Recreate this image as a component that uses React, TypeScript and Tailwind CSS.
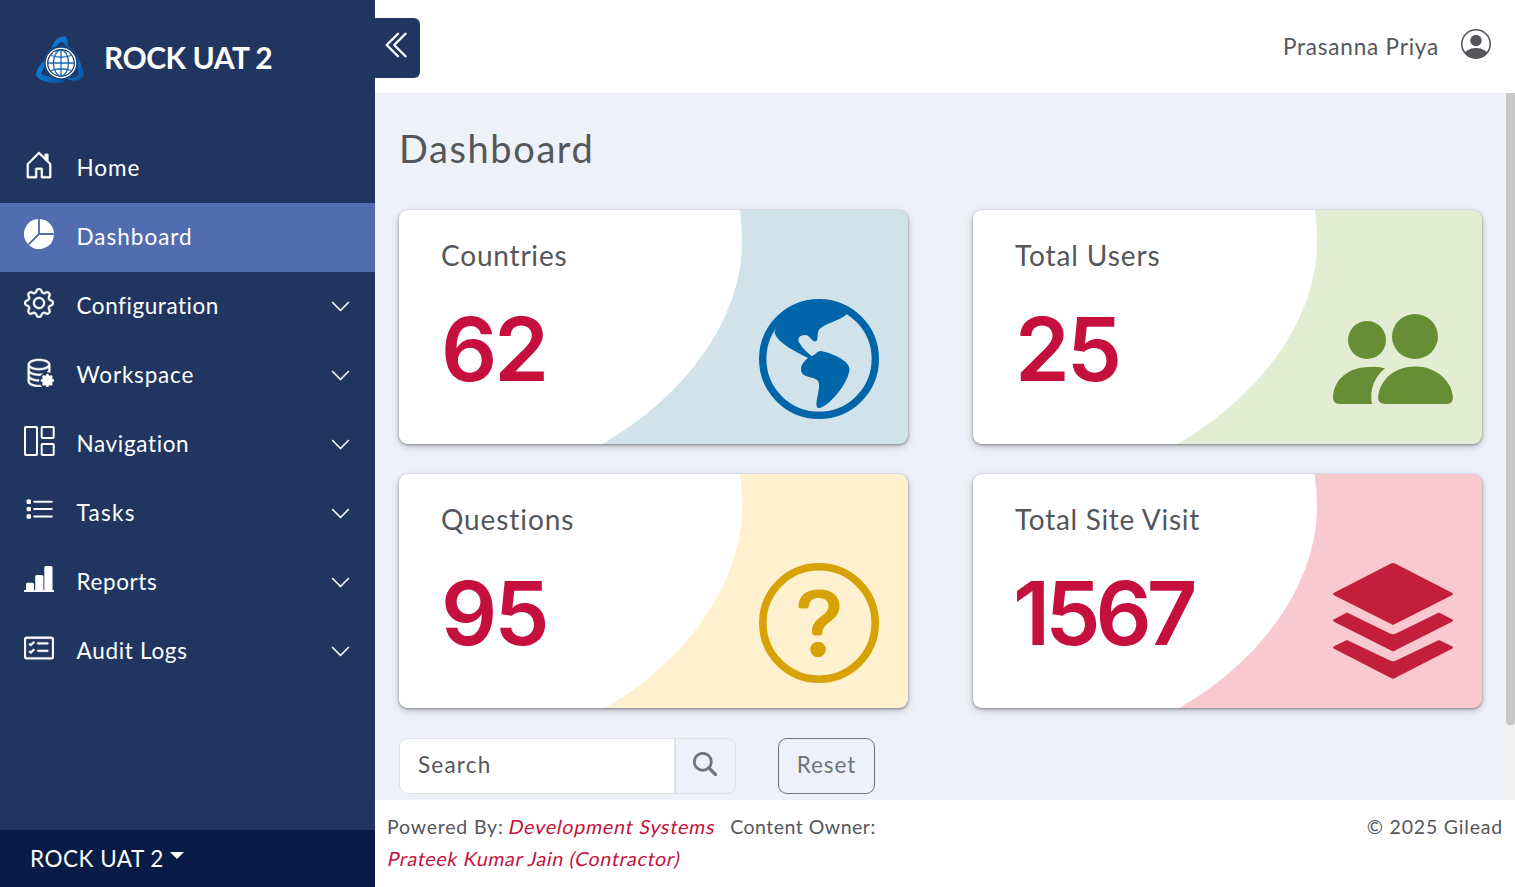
import { BsHouseDoor, BsPieChartFill, BsGear, BsDatabaseGear, BsCardChecklist, BsChevronDown, BsChevronDoubleLeft } from "react-icons/bs";
import type { ReactNode } from "react";

function Logo() {
  return (
    <svg viewBox="0 0 48 48" className="h-12 w-12 shrink-0">
      <defs>
        <linearGradient id="ribbon" x1="0" y1="0" x2="1" y2="1">
          <stop offset="0" stopColor="#0f8be0" />
          <stop offset="0.55" stopColor="#0b70c4" />
          <stop offset="1" stopColor="#0c4a94" />
        </linearGradient>
      </defs>
      <path d="M13.500 17.500C16 8 21 .5 27.500 .3C31 .3 32.500 5 32 10L28.500 9C28 5.500 25 5 22.500 8C19 12 17 17 13.500 17.500Z" fill="url(#ribbon)" />
      <path d="M0 39C1 32 6 26 13 20C9.500 27 8 32 5 37.500C10 41 18 42 25 42L29 46C18 48.500 3 46 0 39Z" fill="url(#ribbon)" />
      <path d="M29 8C38 13 45 24 48 38C48 44 41 46 33 44L30 42C38 42 41.500 40.500 42.500 38C42 28 37 17 29 8Z" fill="url(#ribbon)" />
      <circle cx="25" cy="26.500" r="17.300" fill="#114b8d" />
      <circle cx="25" cy="27" r="15.800" fill="#1b2f5c" />
      <circle cx="25" cy="27" r="14.600" fill="none" stroke="#fff" strokeWidth="1.400" />
      <circle cx="25" cy="27" r="12.700" fill="#fff" />
      <g fill="none" stroke="#1768b0" strokeWidth="1.300">
        <path d="M25 14V40.500M12 27H38M15 19.500Q25 23 35 19.500M15 34.500Q25 31 35 34.500" />
        <ellipse cx="25" cy="27" rx="7.500" ry="13" />
      </g>
    </svg>
  );
}

function PanelsIcon() {
  return (
    <svg viewBox="0 0 31 30" className="h-[30px] w-[31px]" fill="none" stroke="currentColor" strokeWidth="2">
      <rect x="1" y="1" width="12" height="28" rx=".8" />
      <rect x="17.700" y="1" width="12" height="11" rx=".8" />
      <rect x="17.700" y="18" width="12" height="11" rx=".8" />
    </svg>
  );
}

function ListIcon() {
  return (
    <svg viewBox="0 0 30 30" className="h-[30px] w-[30px]" fill="currentColor">
      <rect x="2.600" y="4.500" width="4.400" height="4.400" rx="1" />
      <rect x="2.600" y="11.900" width="4.400" height="4.400" rx="1" />
      <rect x="2.600" y="19.300" width="4.400" height="4.400" rx="1" />
      <rect x="9.200" y="5.700" width="19.500" height="2" rx="1" />
      <rect x="9.200" y="13.100" width="19.500" height="2" rx="1" />
      <rect x="9.200" y="20.500" width="19.500" height="2" rx="1" />
    </svg>
  );
}

function BarsIcon() {
  return (
    <svg viewBox="0 0 30 30" className="h-[30px] w-[30px]" fill="currentColor">
      <path d="M2 27V20.200a1.500 1.500 0 0 1 1.500-1.500h5a1.500 1.500 0 0 1 1.500 1.500V27zM11.200 27V12.500a1.500 1.500 0 0 1 1.500-1.500h5.200a1.500 1.500 0 0 1 1.500 1.500V27zM20.300 27V3.500a1.500 1.500 0 0 1 1.500-1.500h5.200a1.500 1.500 0 0 1 1.500 1.500V27z" />
      <rect x="0" y="26" width="30" height="2" />
    </svg>
  );
}

const nav: { label: string; icon: ReactNode; spacing: string; active?: boolean; open?: boolean }[] = [
  { label: "Home", icon: <BsHouseDoor size={30} strokeWidth={0.2} />, spacing: "tracking-[1px]" },
  { label: "Dashboard", icon: <BsPieChartFill size={30} />, spacing: "tracking-[1px]", active: true },
  { label: "Configuration", icon: <BsGear size={30} strokeWidth={0.25} />, spacing: "tracking-[0.55px]", open: true },
  { label: "Workspace", icon: <BsDatabaseGear size={30} strokeWidth={0.25} />, spacing: "tracking-[0.8px]", open: true },
  { label: "Navigation", icon: <PanelsIcon />, spacing: "tracking-[0.65px]", open: true },
  { label: "Tasks", icon: <ListIcon />, spacing: "tracking-[1.3px]", open: true },
  { label: "Reports", icon: <BarsIcon />, spacing: "tracking-[0.6px]", open: true },
  { label: "Audit Logs", icon: <BsCardChecklist size={30} strokeWidth={0.25} />, spacing: "tracking-[0.7px]", open: true },
];

function GlobeArt() {
  return (
    <svg viewBox="0 0 120 120" className="h-[120px] w-[120px]" fill="#0065a9">
      <circle cx="60" cy="60" r="56.300" fill="none" stroke="#0065a9" strokeWidth="7.400" />
      <path d="M15.500 33C24 13 42 3 60 3C72 3 82 8 87.500 15.500C80 22 67 24 60.500 30C57 34 60.500 42 56 42.500C52 42 51 36 46 36C40 36 38 40 40.500 44C44 50 49 54 52.500 57C57 56 57 52 62 52C73 54 91 62 90.500 70.500C90 82 73 105 61 109C57 110 57 105 58 100C59.500 93 61.500 84 58.500 81.500C54 77 42 79 42 70.500C42 66 45 62 49 59C37 53 17 43 15.500 33Z" />
    </svg>
  );
}

function UsersArt() {
  return (
    <svg viewBox="0 0 120 90" className="h-[90px] w-[120px]" fill="#688e35">
      <ellipse cx="34" cy="26" rx="19" ry="19" />
      <ellipse cx="82" cy="22.500" rx="23" ry="22.500" />
      <path d="M6 90Q0 90 0 83C1 65 16 53 36 53Q46 52 52 54.500C42 62 36 76 39 90Z" />
      <path d="M52 90Q45 90 45 83C47 65 62 52.500 82 52.500C103 52.500 118 66 120 83Q120 90 114 90Z" />
    </svg>
  );
}

function QuestionArt() {
  return (
    <svg viewBox="0 0 120 120" className="h-[120px] w-[120px]" fill="none" stroke="#d6a206">
      <circle cx="60" cy="60" r="56.200" strokeWidth="7.600" />
      <path d="M39.500 43.500Q39.500 45.500 41.500 45.500H47.500Q49.500 45.500 50 43C50.500 37.500 54 35 60 35C66 35 69.500 38 69.500 43C69.500 54 53 53 53 69Q53 72.500 56 72.500H60.500Q63.500 72.500 63.500 69.500C63.500 59 80.500 58 80.500 43C80.500 32 72 26.500 60 26.500C47 26.500 39.500 33 39.500 43.500Z" fill="#d6a206" stroke="none" />
      <circle cx="59" cy="86.500" r="7.800" fill="#d6a206" stroke="none" />
    </svg>
  );
}

function LayersArt() {
  return (
    <svg viewBox="0 0 120 116" className="mb-1 h-[116px] w-[120px]" fill="#c41e3d">
      <path d="M58 .5Q60-.4 62 .5L118.500 29.500Q121.500 31 118.500 32.500L60 62L1.500 32.500Q-1.500 31 1.500 29.500Z" />
      <path d="M14 49.500L57 70.500Q60 72 63 70.500L106 49.500L118.500 56Q121.500 57.500 118.500 59L60 88.500L1.500 59Q-1.500 57.500 1.500 56Z" />
      <path d="M14 77L57 97.500Q60 99 63 97.500L106 77L118.500 83Q121.500 84.500 118.500 86L62 115Q60 116.500 58 115L1.500 86Q-1.500 84.500 1.500 83Z" />
    </svg>
  );
}

function StatCard({ title, value, tint, art, curve, titleSpacing, valueSpacing }: { title: string; value: string; tint: string; art: ReactNode; curve: string; titleSpacing: string; valueSpacing: string }) {
  return (
    <div className={`relative h-[234px] w-[509px] overflow-hidden rounded-[9px] shadow-[0_1px_3px_rgba(0,0,0,0.4),0_3px_8px_rgba(0,0,0,0.18)] ${tint}`}>
      <svg className="absolute inset-0" width="509" height="234" viewBox="0 0 509 234">
        <path d={curve} fill="#fff" />
      </svg>
      <div className="relative flex h-full justify-between">
        <div className="pl-[42px] pt-[27px]">
          <h2 className={`whitespace-nowrap text-[28px] leading-9 text-[#54565b] ${titleSpacing}`}>{title}</h2>
          <p className={`mt-[21px] whitespace-nowrap font-['Inter',sans-serif] text-[88px] font-semibold leading-[110px] text-[#c50f3c] ${valueSpacing}`}>{value}</p>
        </div>
        <div className="mb-[25px] mr-[29px] flex h-[120px] w-[120px] items-center justify-center self-end">{art}</div>
      </div>
    </div>
  );
}

const leftCurve = "M0 0H341Q343 16 343 32C343 110 285 187 203 234H0Z";
const leftLowCurve = "M0 0H341Q343 16 343 32C343 110 287 187 206 234H0Z";
const rightCurve = "M0 0H342Q344 16 344 32C344 110 286 187 204 234H0Z";
const rightLowCurve = "M0 0H341.500Q344 16 344 32C344 110 288 187 206 234H0Z";

export default function App() {
  return (
    <div className="flex h-[887px] w-[1515px] overflow-hidden bg-white font-['Lato',sans-serif] text-[#54565b]">
      <aside className="flex w-[375px] shrink-0 flex-col bg-[#203660] text-white">
        <div className="flex h-[134px] items-start gap-5 pl-9 pt-9">
          <Logo />
          <span className="mt-[3px] whitespace-nowrap text-[30px] font-bold leading-9 tracking-[-0.5px]">ROCK UAT 2</span>
        </div>
        <nav>
          {nav.map((n) => (
            <div key={n.label} className={`flex h-[69px] items-center pl-6 pr-6 ${n.active ? "bg-[#526cb0]" : ""}`}>
              <span className="mb-[7px] flex w-[52.500px]">{n.icon}</span>
              <span className={`mb-[2px] flex-1 whitespace-nowrap text-[22.500px] leading-8 ${n.spacing}`}>{n.label}</span>
              {n.open && <BsChevronDown size={21} strokeWidth={0.2} />}
            </div>
          ))}
        </nav>
        <div className="mt-auto flex h-[57px] items-center gap-1.5 bg-[#081c47] pl-[30px]">
          <span className="whitespace-nowrap text-[22.500px] tracking-[0.5px]">ROCK UAT 2</span>
          <svg viewBox="0 0 14 7" className="mb-1.5 h-[7px] w-3.5"><path d="M0 0H14L7 7Z" fill="#fff" /></svg>
        </div>
      </aside>
      <div className="flex flex-1 flex-col">
        <header className="flex h-[93px] items-start justify-between pr-6">
          <button className="mt-[18px] flex h-[60px] w-[45px] items-center rounded-r-md bg-[#203660] pb-1.5 pl-2 text-white">
            <BsChevronDoubleLeft size={30} strokeWidth={0.25} />
          </button>
          <div className="flex items-start gap-[22px]">
            <span className="mt-[31px] whitespace-nowrap text-[22.500px] leading-8 tracking-[0.8px]">Prasanna Priya</span>
            <svg viewBox="0 0 30 30" className="mt-[29px] h-[30px] w-[30px]">
              <defs><clipPath id="face"><circle cx="15" cy="15" r="14.500" /></clipPath></defs>
              <circle cx="15" cy="15" r="14.200" fill="none" stroke="#54565b" strokeWidth="1.600" />
              <circle cx="15" cy="11.500" r="5.700" fill="#54565b" />
              <ellipse cx="15" cy="27.500" rx="12.500" ry="8.500" fill="#54565b" clipPath="url(#face)" />
            </svg>
          </div>
        </header>
        <main className="flex h-[707px] bg-[#eef1fa]">
          <div className="flex-1 pl-6">
            <h1 className="pt-[31px] text-[38px] leading-[48px] tracking-[1.6px]">Dashboard</h1>
            <div className="mt-[38px] grid grid-cols-[509px_509px] gap-x-[65px] gap-y-[30px]">
              <StatCard title="Countries" value="62" tint="bg-[#d2e2ea]" art={<GlobeArt />} curve={leftCurve} titleSpacing="tracking-[0.8px]" valueSpacing="tracking-[-3px]" />
              <StatCard title="Total Users" value="25" tint="bg-[#e2edd3]" art={<UsersArt />} curve={rightCurve} titleSpacing="tracking-[0.9px]" valueSpacing="tracking-[-3px]" />
              <StatCard title="Questions" value="95" tint="bg-[#fff1cf]" art={<QuestionArt />} curve={leftLowCurve} titleSpacing="tracking-[0.9px]" valueSpacing="tracking-[-3px]" />
              <StatCard title="Total Site Visit" value="1567" tint="bg-[#f8cacf]" art={<LayersArt />} curve={rightLowCurve} titleSpacing="tracking-[0.7px]" valueSpacing="-ml-0.5 tracking-[-5px]" />
            </div>
            <div className="mt-[30px] flex h-14 text-[22.500px]">
              <div className="flex w-[277px] items-center rounded-l-[9px] border border-r-2 border-[#dee2e6] bg-white pb-0.5 pl-[18px] tracking-[1.2px]">Search</div>
              <div className="flex w-[60px] items-center justify-center rounded-r-[9px] border border-l-0 border-[#dee2e6] pr-0.5">
                <svg viewBox="0 0 24 24" className="mb-1 h-6 w-6" fill="none" stroke="#6c757d">
                  <circle cx="9.800" cy="9.800" r="8.500" strokeWidth="2.800" />
                  <path d="M15.800 15.800L22.500 22.500" strokeWidth="3.200" strokeLinecap="round" />
                </svg>
              </div>
              <button className="ml-[42px] flex w-[97px] items-center justify-center rounded-[9px] border border-[#6c757d] pb-0.5 tracking-[0.9px] text-[#6c757d]">Reset</button>
            </div>
          </div>
          <div className="w-[9px] bg-[#f1f1f1]"><div className="h-[632px] rounded-b bg-[#c8c8c8]" /></div>
        </main>
        <footer className="flex justify-between px-3 pt-[11px] text-[19.500px] leading-8">
          <div className="flex w-[560px] flex-wrap whitespace-pre">
            <span className="tracking-[0.8px]">Powered By: </span>
            <span className="mr-[14px] -skew-x-12 tracking-[0.85px] text-[#c50f3c]">Development Systems</span>
            <span className="tracking-[0.5px]">Content Owner:</span>
            <span className="ml-px -skew-x-12 tracking-[0.7px] text-[#c50f3c]">Prateek Kumar Jain (Contractor)</span>
          </div>
          <span className="whitespace-nowrap tracking-[0.8px]">© 2025 Gilead</span>
        </footer>
      </div>
    </div>
  );
}
